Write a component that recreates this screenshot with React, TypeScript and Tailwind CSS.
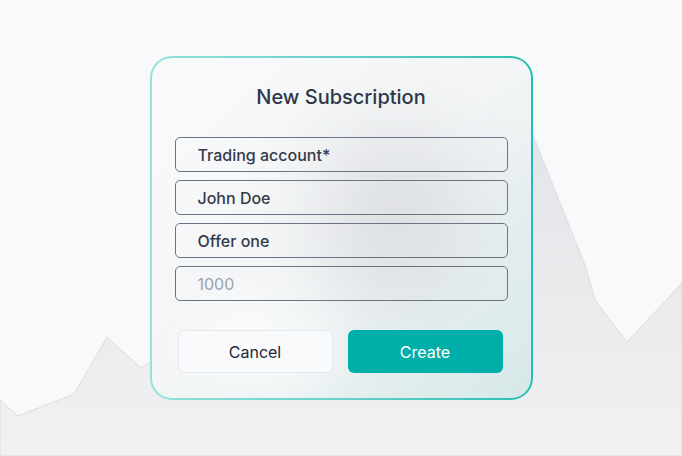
import React from 'react';

const fields = [
  { value: 'Trading account*', placeholder: false },
  { value: 'John Doe', placeholder: false },
  { value: 'Offer one', placeholder: false },
  { value: '1000', placeholder: true },
];

const Backdrop = () => (
  <svg className="absolute inset-0 h-full w-full" viewBox="0 0 682 456" preserveAspectRatio="none">
    <defs>
      <linearGradient id="hill" x1="0" y1="0" x2="0" y2="1">
        <stop offset="0" stopColor="#e3e4e7" />
        <stop offset="1" stopColor="#f1f1f3" />
      </linearGradient>
    </defs>
    <path
      d="M0 400 L18 416 L74 394 L107 337 L141 368 L200 330 L330 150 L450 120 L533 135 L585 265 L595 300 L627 342 L682 283 L682 456 L0 456 Z"
      fill="url(#hill)"
      stroke="#dcdde0"
      strokeWidth="1"
    />
  </svg>
);

const SubscriptionCard = () => (
  <div className="relative rounded-[22px] bg-gradient-to-r from-[#93e2dc] to-[#22bfb4] p-[2px]">
    <div className="relative w-[379px] h-[340px] overflow-hidden rounded-[20px] bg-gradient-to-br from-[#f9fafb] via-[#f3f5f6] to-[#d6e8e8]">
      <div className="absolute left-[170px] top-[70px] h-[180px] w-[150px] rounded-full bg-[#dcdee2] blur-[40px] opacity-90" />
      <div className="absolute left-[40px] top-[250px] h-[80px] w-[140px] rounded-full bg-white blur-[30px] opacity-70" />
      <div className="relative flex flex-col px-[23px] pt-[25px]">
        <h1 className="text-center text-[20px] leading-[28px] font-medium text-[#2d3748]">New Subscription</h1>
        <div className="mt-[26px] flex flex-col gap-[8px]">
          {fields.map((f) => (
            <div
              key={f.value}
              className="flex h-[35px] items-center rounded-[5px] border border-[#6b7385] px-[22px]"
            >
              <span
                className={
                  f.placeholder
                    ? 'text-[16px] font-normal text-[#9ca3af]'
                    : 'text-[16px] font-medium text-[#343b4a]'
                }
              >
                {f.value}
              </span>
            </div>
          ))}
        </div>
        <div className="mt-[29px] flex gap-[15px] px-[3px]">
          <button className="h-[43px] w-[155px] rounded-[6px] border border-[#e4e7eb] bg-[#f9fafb] text-[16px] text-[#1f2937]">
            Cancel
          </button>
          <button className="h-[43px] w-[155px] rounded-[6px] bg-[#00afa9] text-[16px] text-white">
            Create
          </button>
        </div>
      </div>
    </div>
  </div>
);

export default function App() {
  return (
    <div
      className="relative flex h-[456px] w-[682px] items-center justify-center overflow-hidden bg-[#f8f9fa]"
      style={{ fontFamily: 'Inter, "Noto Sans", sans-serif' }}
    >
      <Backdrop />
      <SubscriptionCard />
    </div>
  );
}
